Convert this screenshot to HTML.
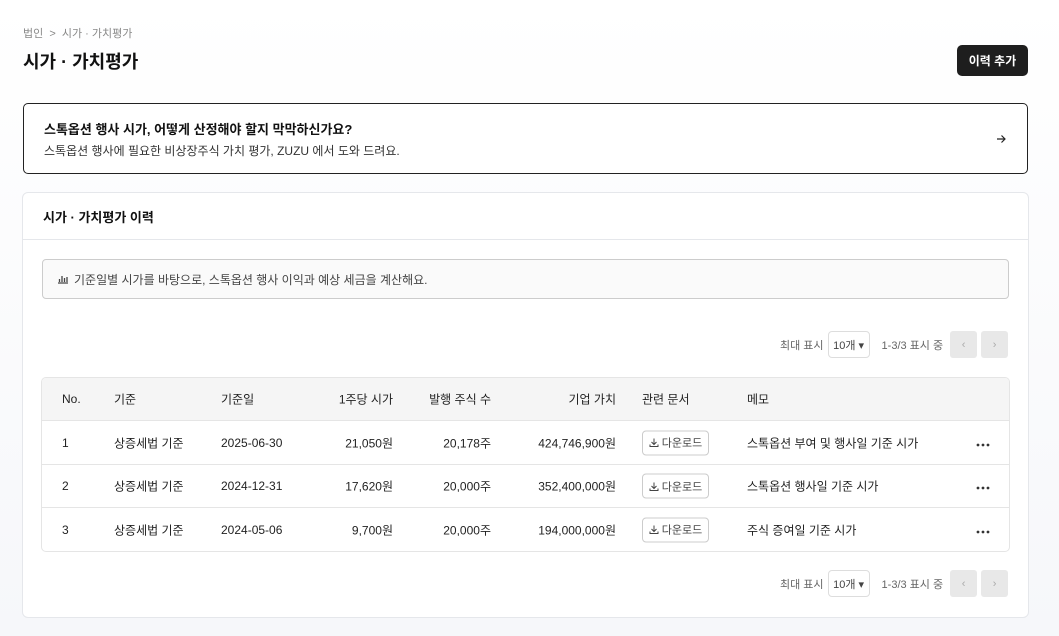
<!DOCTYPE html>
<html><head><meta charset="utf-8"><style>
*{box-sizing:border-box;margin:0;padding:0}
body{width:1059px;height:636px;overflow:hidden;background:linear-gradient(180deg,#fff 0%,#f6f7fa 100%);font-family:"Liberation Sans","Noto Sans CJK KR",sans-serif;color:#222;position:relative}
.abs{position:absolute}
.bc{left:23px;top:25px;font-size:11px;color:#888}
h1{position:absolute;left:23px;top:48px;font-size:18px;font-weight:700;color:#111}
.btn{left:957px;top:45px;width:71px;height:31px;background:#1e1e1e;color:#fff;border-radius:5px;font-size:12px;font-weight:700;display:flex;align-items:center;justify-content:center}
.promo{left:23px;top:103px;width:1005px;height:71px;border:1px solid #222;border-radius:5px;background:#fff}
.card{left:22px;top:192px;width:1007px;height:426px;border:1px solid #e5e7eb;border-radius:6px;background:#fff}
.info{left:42px;top:259px;width:967px;height:40px;border:1px solid #ccc;border-radius:4px;background:#fafafa;font-size:12px;color:#444;display:flex;align-items:center;padding-left:14px}
.pg{font-size:11px;color:#666;display:flex;align-items:center}
.sel{width:42px;height:27px;border:1px solid #ddd;border-radius:4px;margin:0 12px 0 4px;display:flex;align-items:center;justify-content:center;color:#444}
.nb{width:27px;height:27px;background:#e8e8e8;border-radius:3px;margin-left:4px;color:#aaa;display:flex;align-items:center;justify-content:center;font-size:11px}
.tbl{left:41px;top:377px;width:969px;height:175px;border:1px solid #e5e5e5;border-radius:5px;overflow:hidden;background:#fff}
.row{position:absolute;left:0;width:100%;font-size:12px;color:#222}
.row span{position:absolute;top:50%;transform:translateY(-50%);white-space:nowrap}
.dl{border:1px solid #ccc;border-radius:4px;height:25px;width:67px;display:flex;align-items:center;justify-content:center;font-size:11px;color:#444}
</style></head><body>
<div class="abs bc">법인 &nbsp;&gt;&nbsp; 시가 · 가치평가</div>
<h1>시가 · 가치평가</h1>
<div class="abs btn">이력 추가</div>
<div class="abs promo">
 <div class="abs" style="left:20px;top:15px;font-size:13px;font-weight:700;color:#111">스톡옵션 행사 시가, 어떻게 산정해야 할지 막막하신가요?</div>
 <div class="abs" style="left:20px;top:38px;font-size:12px;color:#333">스톡옵션 행사에 필요한 비상장주식 가치 평가, ZUZU 에서 도와 드려요.</div>
 <svg class="abs" style="left:972px;top:30px" width="10" height="10" viewBox="0 0 10 10"><path d="M1 5h8M5.5 1.5L9 5 5.5 8.5" stroke="#222" stroke-width="1.2" fill="none"/></svg>
</div>
<div class="abs card">
 <div class="abs" style="left:20px;top:14px;font-size:13px;font-weight:600;color:#111">시가 · 가치평가 이력</div>
 <div class="abs" style="left:0;top:46px;width:100%;border-top:1px solid #e5e7eb"></div>
</div>
<div class="abs info"><svg width="12" height="10" viewBox="0 0 12 10" style="margin-right:5px"><path d="M1 9h10M2.5 8V5M5 8V2M7.5 8V4M10 8V3" stroke="#444" stroke-width="1.3"/></svg>기준일별 시가를 바탕으로, 스톡옵션 행사 이익과 예상 세금을 계산해요.</div>
<div class="abs pg" style="left:780px;top:331px">최대 표시<div class="sel">10개 ▾</div>1-3/3 표시 중<div class="nb" style="margin-left:7px">‹</div><div class="nb">›</div></div>
<div class="abs tbl">
 <div class="row" style="top:0;height:43px;background:#f5f5f5;border-bottom:1px solid #e5e5e5">
  <span style="left:20px">No.</span><span style="left:72px">기준</span><span style="left:179px">기준일</span>
  <span style="right:616px">1주당 시가</span><span style="right:518px">발행 주식 수</span><span style="right:393px">기업 가치</span>
  <span style="left:600px">관련 문서</span><span style="left:705px">메모</span></div>
 <div class="row" style="top:43px;height:44px;border-bottom:1px solid #e5e5e5">
  <span style="left:20px">1</span><span style="left:72px">상증세법 기준</span><span style="left:179px">2025-06-30</span>
  <span style="right:616px">21,050원</span><span style="right:518px">20,178주</span><span style="right:393px">424,746,900원</span>
  <span style="left:600px" class="dl"><svg width="10" height="10" viewBox="0 0 10 10" style="margin-right:3px"><path d="M5 1v6M2.5 4.5L5 7l2.5-2.5M1 7v2h8V7" stroke="#444" fill="none" stroke-width="1"/></svg>다운로드</span><span style="left:705px">스톡옵션 부여 및 행사일 기준 시가</span><span style="left:934px"><svg width="14" height="4"><circle cx="2" cy="2" r="1.4" fill="#333"/><circle cx="7" cy="2" r="1.4" fill="#333"/><circle cx="12" cy="2" r="1.4" fill="#333"/></svg></span></div>
 <div class="row" style="top:87px;height:43px;border-bottom:1px solid #e5e5e5">
  <span style="left:20px">2</span><span style="left:72px">상증세법 기준</span><span style="left:179px">2024-12-31</span>
  <span style="right:616px">17,620원</span><span style="right:518px">20,000주</span><span style="right:393px">352,400,000원</span>
  <span style="left:600px" class="dl"><svg width="10" height="10" viewBox="0 0 10 10" style="margin-right:3px"><path d="M5 1v6M2.5 4.5L5 7l2.5-2.5M1 7v2h8V7" stroke="#444" fill="none" stroke-width="1"/></svg>다운로드</span><span style="left:705px">스톡옵션 행사일 기준 시가</span><span style="left:934px"><svg width="14" height="4"><circle cx="2" cy="2" r="1.4" fill="#333"/><circle cx="7" cy="2" r="1.4" fill="#333"/><circle cx="12" cy="2" r="1.4" fill="#333"/></svg></span></div>
 <div class="row" style="top:130px;height:43px">
  <span style="left:20px">3</span><span style="left:72px">상증세법 기준</span><span style="left:179px">2024-05-06</span>
  <span style="right:616px">9,700원</span><span style="right:518px">20,000주</span><span style="right:393px">194,000,000원</span>
  <span style="left:600px" class="dl"><svg width="10" height="10" viewBox="0 0 10 10" style="margin-right:3px"><path d="M5 1v6M2.5 4.5L5 7l2.5-2.5M1 7v2h8V7" stroke="#444" fill="none" stroke-width="1"/></svg>다운로드</span><span style="left:705px">주식 증여일 기준 시가</span><span style="left:934px"><svg width="14" height="4"><circle cx="2" cy="2" r="1.4" fill="#333"/><circle cx="7" cy="2" r="1.4" fill="#333"/><circle cx="12" cy="2" r="1.4" fill="#333"/></svg></span></div>
</div>
<div class="abs pg" style="left:780px;top:570px">최대 표시<div class="sel">10개 ▾</div>1-3/3 표시 중<div class="nb" style="margin-left:7px">‹</div><div class="nb">›</div></div>
</body></html>
